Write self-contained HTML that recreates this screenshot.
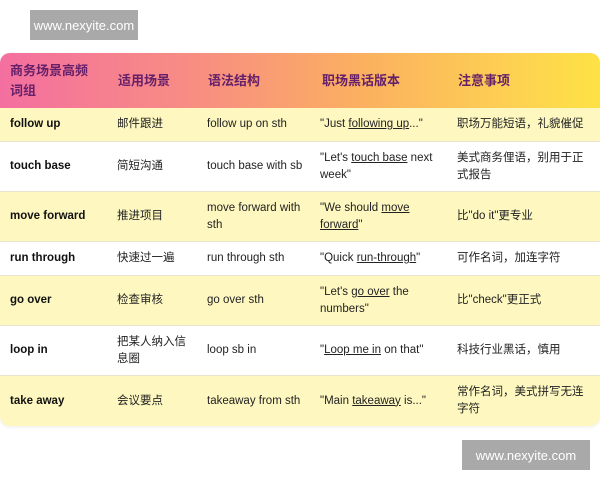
<!DOCTYPE html>
<html><head><meta charset="utf-8"><style>
*{margin:0;padding:0;box-sizing:border-box}
body{width:600px;height:480px;background:#fff;font-family:"Liberation Sans","Noto Sans CJK SC",sans-serif;font-size:11.5px;color:#222;position:relative;overflow:hidden}
.wm{position:absolute;background:#a9a9a9;color:#fff;font-size:13px;display:flex;align-items:center;justify-content:center}
.tbl{position:absolute;left:0;top:53px;width:600px;height:373px;border-radius:10px;overflow:hidden;box-shadow:0 1px 3px rgba(0,0,0,.08)}
.row{position:absolute;left:0;width:600px;border-bottom:1px solid #e8e4d0}
.y{background:#fef8c0}.w{background:#fff}
.c{position:absolute;top:0;height:100%;display:flex;align-items:center;line-height:17px}
.hd{background:linear-gradient(90deg,#f46fa0 0%,#f89080 35%,#fbb060 60%,#fdd052 85%,#fde245 100%);color:#66206a;font-weight:bold;font-size:13px}
.b{font-weight:bold;color:#111}
u{text-decoration:underline}
</style></head><body>
<div class="wm" style="left:30px;top:10px;width:108px;height:30px">www.nexyite.com</div>
<div class="tbl">
<div class="row hd" style="top:0;height:55px;border:none">
<div class="c" style="left:10px;width:82px;line-height:20px">商务场景高频词组</div>
<div class="c" style="left:118px">适用场景</div>
<div class="c" style="left:208px">语法结构</div>
<div class="c" style="left:322px">职场黑话版本</div>
<div class="c" style="left:458px">注意事项</div>
</div>
<div class="row y" style="top:55px;height:34px">
<div class="c b" style="left:10px">follow up</div><div class="c" style="left:117px">邮件跟进</div><div class="c" style="left:207px">follow up on sth</div><div class="c" style="left:320px">"Just&nbsp;<u>following up</u>..."</div><div class="c" style="left:457px">职场万能短语，礼貌催促</div></div>
<div class="row w" style="top:89px;height:50px">
<div class="c b" style="left:10px">touch base</div><div class="c" style="left:117px">简短沟通</div><div class="c" style="left:207px">touch base with sb</div><div class="c" style="left:320px;width:120px;display:block;padding-top:8px">"Let's <u>touch base</u> next week"</div><div class="c" style="left:457px;width:135px;display:block;padding-top:8px">美式商务俚语，别用于正式报告</div></div>
<div class="row y" style="top:139px;height:50px">
<div class="c b" style="left:10px">move forward</div><div class="c" style="left:117px">推进项目</div><div class="c" style="left:207px;width:105px;display:block;padding-top:8px">move forward with sth</div><div class="c" style="left:320px;width:100px;display:block;padding-top:8px">"We should <u>move forward</u>"</div><div class="c" style="left:457px">比"do it"更专业</div></div>
<div class="row w" style="top:189px;height:34px">
<div class="c b" style="left:10px">run through</div><div class="c" style="left:117px">快速过一遍</div><div class="c" style="left:207px">run through sth</div><div class="c" style="left:320px">"Quick&nbsp;<u>run-through</u>"</div><div class="c" style="left:457px">可作名词，加连字符</div></div>
<div class="row y" style="top:223px;height:50px">
<div class="c b" style="left:10px">go over</div><div class="c" style="left:117px">检查审核</div><div class="c" style="left:207px">go over sth</div><div class="c" style="left:320px;width:100px;display:block;padding-top:8px">"Let's <u>go over</u> the numbers"</div><div class="c" style="left:457px">比"check"更正式</div></div>
<div class="row w" style="top:273px;height:50px">
<div class="c b" style="left:10px">loop in</div><div class="c" style="left:117px;width:80px;display:block;padding-top:8px">把某人纳入信息圈</div><div class="c" style="left:207px">loop sb in</div><div class="c" style="left:320px">"<u>Loop me in</u>&nbsp;on that"</div><div class="c" style="left:457px">科技行业黑话，慎用</div></div>
<div class="row y" style="top:323px;height:50px;border:none">
<div class="c b" style="left:10px">take away</div><div class="c" style="left:117px">会议要点</div><div class="c" style="left:207px">takeaway from sth</div><div class="c" style="left:320px">"Main&nbsp;<u>takeaway</u>&nbsp;is..."</div><div class="c" style="left:457px;width:135px;display:block;padding-top:8px">常作名词，美式拼写无连字符</div></div>
</div>
<div class="wm" style="left:462px;top:440px;width:128px;height:30px">www.nexyite.com</div>
</body></html>
